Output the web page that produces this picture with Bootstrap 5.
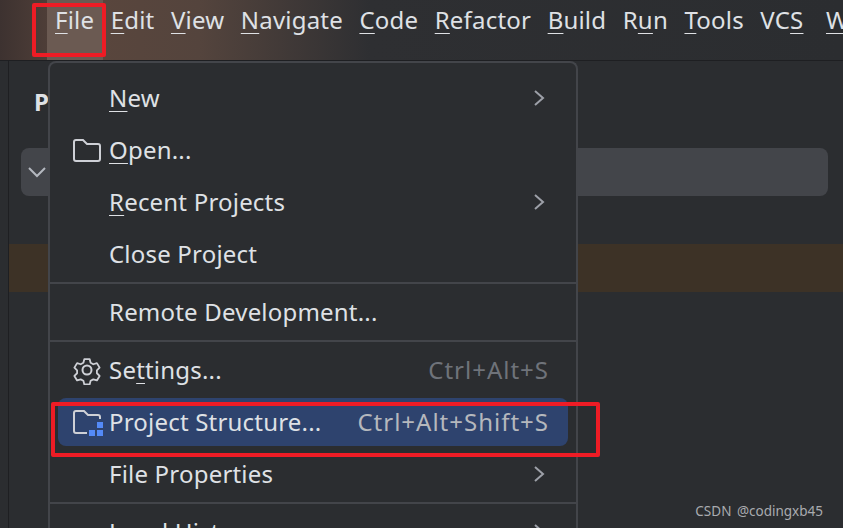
<!DOCTYPE html>
<html lang="en">
<head>
    <meta charset="UTF-8">
    <meta name="viewport" content="width=device-width, initial-scale=1.0">
    <title>File menu</title>
    <link href="https://cdn.jsdelivr.net/npm/bootstrap@5.3.3/dist/css/bootstrap.min.css" rel="stylesheet">
    <style>
        html, body { height: 100%; }
        body {
            background: #2b2d30;
            color: #dfe1e5;
            font-family: "Noto Sans", "Open Sans", sans-serif;
            font-size: 24px;
            line-height: 32px;
            letter-spacing: .2px;
            overflow: hidden;
            position: relative;
        }
        u { text-underline-offset: 4px; text-decoration-thickness: 1px; }

        .top-bar {
            height: 61px;
            padding-left: 55px;
            gap: 16.5px;
            border-bottom: 1px solid #1e1f22;
            background: linear-gradient(90deg, #3d3230 0, #5a463d 80px, #54443d 200px, #2e2f32 370px, #2b2d30 100%);
        }
        .top-item { padding-top: 4px; white-space: nowrap; }
        .top-item:last-child { margin-left: 6px; }
        .top-item.is-open { position: relative; }
        .top-item.is-open::before {
            content: "";
            position: absolute;
            left: -8px; right: -9px; top: 0; height: 60px;
            background: #6b5a52;
            z-index: -1;
        }

        .side-panel { flex: 1; min-height: 0; border-left: 1px solid #1e1f22; margin-left: 8px; }
        .panel-title { font-weight: 700; padding: 25px 0 0 25px; height: 87px; }
        .search-bar { height: 48px; margin: 0 15px 0 12px; background: #43454a; border-radius: 8px; padding-left: 6px; }
        .warn-row { height: 48px; margin-top: 48px; background: #3d3226; }

        .file-menu {
            position: absolute;
            left: 48px; top: 61px; bottom: 0;
            width: 530px;
            padding: 9px 8px 0;
            overflow: hidden;
            background: #2b2d30;
            border: 2px solid #43454a;
            border-bottom: 0;
            border-radius: 8px 8px 0 0;
        }
        .menu-line {
            height: 52px;
            padding: 0 19px 0 51px;
            position: relative;
            border-radius: 8px;
            flex-shrink: 0;
        }
        .menu-line.is-active { background: #2e436e; height: 48px; margin: 2px 0; }
        .menu-sep { height: 2px; background: #43454a; margin: 2px -8px; }
        .menu-ico { position: absolute; left: 14px; top: 50%; transform: translateY(-50%); }
        .menu-arrow { margin-right: 4px; }
        .hotkey { color: #6f737a; letter-spacing: 1px; }
        .is-active .hotkey { color: #b5b8bd; }

        .red-frame { position: absolute; border: 4px solid #ee1c25; border-radius: 2px; }
        .frame-file { left: 32px; top: 3px; width: 74px; height: 54px; }
        .frame-struct { left: 51px; top: 402px; width: 549px; height: 55px; }

        .watermark {
            position: absolute;
            right: 20px; bottom: 7px;
            font-size: 13.5px;
            line-height: 20px;
            letter-spacing: 0;
            word-spacing: 2px;
            color: #a9abaf;
        }
    </style>
</head>
<body class="d-flex flex-column">

    <div class="top-bar d-flex position-relative" style="z-index:0">
        <div class="top-item is-open"><u>F</u>ile</div>
        <div class="top-item"><u>E</u>dit</div>
        <div class="top-item"><u>V</u>iew</div>
        <div class="top-item"><u>N</u>avigate</div>
        <div class="top-item"><u>C</u>ode</div>
        <div class="top-item"><u>R</u>efactor</div>
        <div class="top-item"><u>B</u>uild</div>
        <div class="top-item">R<u>u</u>n</div>
        <div class="top-item"><u>T</u>ools</div>
        <div class="top-item">VC<u>S</u></div>
        <div class="top-item"><u>W</u></div>
    </div>

    <div class="side-panel">
        <div class="panel-title">P</div>
        <div class="search-bar d-flex align-items-center">
            <svg width="20" height="20" viewBox="0 0 20 20" fill="none" stroke="#b4b8bf" stroke-width="2"><path d="M2 6l8 8 8-8"/></svg>
        </div>
        <div class="warn-row"></div>
    </div>

    <div class="file-menu">
        <div class="menu-line d-flex align-items-center justify-content-between">
            <span><u>N</u>ew</span>
            <svg class="menu-arrow" width="12" height="20" viewBox="0 0 12 20" fill="none" stroke="#9da0a8" stroke-width="2"><path d="M2 3l8 7-8 7"/></svg>
        </div>
        <div class="menu-line d-flex align-items-center">
            <svg class="menu-ico" width="30" height="26" viewBox="0 0 30 26" fill="none" stroke="#ced0d6" stroke-width="2"><path d="M2 5a2 2 0 0 1 2-2h7l4 4h11a2 2 0 0 1 2 2v13a2 2 0 0 1-2 2H4a2 2 0 0 1-2-2z"/></svg>
            <span><u>O</u>pen...</span>
        </div>
        <div class="menu-line d-flex align-items-center justify-content-between">
            <span><u>R</u>ecent Projects</span>
            <svg class="menu-arrow" width="12" height="20" viewBox="0 0 12 20" fill="none" stroke="#9da0a8" stroke-width="2"><path d="M2 3l8 7-8 7"/></svg>
        </div>
        <div class="menu-line d-flex align-items-center">Close Project</div>
        <div class="menu-sep"></div>
        <div class="menu-line d-flex align-items-center">Remote Development...</div>
        <div class="menu-sep"></div>
        <div class="menu-line d-flex align-items-center justify-content-between">
            <svg class="menu-ico" width="30" height="30" viewBox="0 0 30 30" fill="none" stroke="#ced0d6" stroke-width="2" stroke-linejoin="round"><path d="M12 3h6l1 4 3 1.6 4-1.2 3 5-3 3 0 3.2 3 3-3 5-4-1.2-3 1.6-1 4h-6l-1-4-3-1.6-4 1.2-3-5 3-3 0-3.2-3-3 3-5 4 1.2 3-1.6z" transform="translate(1.5 1.5) scale(.9)"/><circle cx="15" cy="15" r="4.5"/></svg>
            <span>Se<u>t</u>tings...</span>
            <span class="hotkey">Ctrl+Alt+S</span>
        </div>
        <div class="menu-line is-active d-flex align-items-center justify-content-between">
            <svg class="menu-ico" width="32" height="28" viewBox="0 0 32 28" fill="none"><path d="M15 25H4a2 2 0 0 1-2-2V5a2 2 0 0 1 2-2h8l4 4h10a2 2 0 0 1 2 2v2" stroke="#ced0d6" stroke-width="2"/><rect x="17" y="22" width="6" height="6" fill="#548af7"/><rect x="25" y="22" width="6" height="6" fill="#548af7"/><rect x="25" y="14" width="6" height="6" fill="#548af7"/></svg>
            <span>Project Structure...</span>
            <span class="hotkey">Ctrl+Alt+Shift+S</span>
        </div>
        <div class="menu-line d-flex align-items-center justify-content-between">
            <span>File Properties</span>
            <svg class="menu-arrow" width="12" height="20" viewBox="0 0 12 20" fill="none" stroke="#9da0a8" stroke-width="2"><path d="M2 3l8 7-8 7"/></svg>
        </div>
        <div class="menu-sep"></div>
        <div class="menu-line d-flex align-items-center justify-content-between">
            <span>Local History</span>
            <svg class="menu-arrow" width="12" height="20" viewBox="0 0 12 20" fill="none" stroke="#9da0a8" stroke-width="2"><path d="M2 3l8 7-8 7"/></svg>
        </div>
    </div>

    <div class="red-frame frame-file"></div>
    <div class="red-frame frame-struct"></div>
    <div class="watermark">CSDN @codingxb45</div>

    <script src="https://cdn.jsdelivr.net/npm/bootstrap@5.3.3/dist/js/bootstrap.bundle.min.js"></script>
</body>
</html>
